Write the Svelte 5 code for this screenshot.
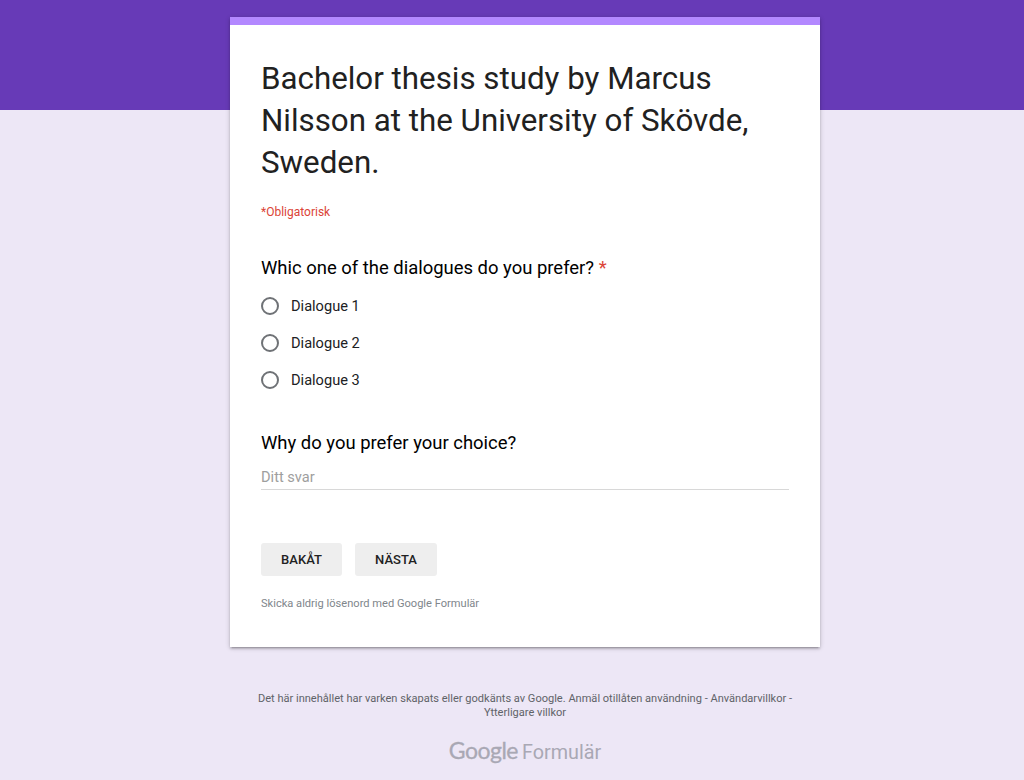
<script>
  const options = ['Dialogue 1', 'Dialogue 2', 'Dialogue 3'];
</script>

<div class="page">
  <form class="card" on:submit|preventDefault>
    <h1 class="title">Bachelor thesis study by Marcus Nilsson at the University of Skövde, Sweden.</h1>
    <p class="required-note">*Obligatorisk</p>

    <fieldset class="question">
      <legend class="question-title">Whic one of the dialogues do you prefer? <span class="star">*</span></legend>
      <div class="options">
        {#each options as option}
          <label class="option">
            <span class="radio"></span>
            <span>{option}</span>
          </label>
        {/each}
      </div>
    </fieldset>

    <div class="question second">
      <div class="question-title">Why do you prefer your choice?</div>
      <div class="answer">Ditt svar</div>
    </div>

    <div class="buttons">
      <button type="button" class="btn">BAKÅT</button>
      <button type="button" class="btn next">NÄSTA</button>
    </div>

    <p class="warning">Skicka aldrig lösenord med Google Formulär</p>
  </form>

  <footer class="footer">
    <p class="disclaimer">Det här innehållet har varken skapats eller godkänts av Google. Anmäl otillåten användning - Användarvillkor - Ytterligare villkor</p>
    <div class="brand"><span class="google">Google</span><span class="product">Formulär</span></div>
  </footer>
</div>

<style>
  :global(body) {
    margin: 0;
    background: #ede7f6;
  }

  .page {
    height: 780px;
    overflow: hidden;
    box-sizing: border-box;
    padding-top: 17px;
    background: linear-gradient(#673ab7 110px, #ede7f6 110px);
    font-family: Roboto, "Liberation Sans", sans-serif;
    color: #202124;
  }

  .card {
    box-sizing: border-box;
    width: 590px;
    height: 630px;
    margin-left: 230px;
    padding: 33px 31px 0 31px;
    background: #fff;
    border-top: 8px solid #b388ff;
    box-shadow: 0 2px 2px 0 rgba(0, 0, 0, 0.14), 0 3px 1px -2px rgba(0, 0, 0, 0.12), 0 1px 5px 0 rgba(0, 0, 0, 0.2);
  }

  .title {
    margin: 0;
    font-size: 31.3px;
    font-weight: 400;
    line-height: 42px;
    color: #212121;
  }

  .required-note {
    margin: 20px 0 0;
    font-size: 12px;
    line-height: 16px;
    color: #db4437;
  }

  .question {
    margin: 0;
    padding: 0;
    border: 0;
  }

  fieldset.question {
    margin-top: 36px;
  }

  .question-title {
    padding: 0;
    font-size: 18.45px;
    line-height: 24px;
    color: #000;
  }

  .star {
    color: #db4437;
  }

  .options {
    display: flex;
    flex-direction: column;
    gap: 17px;
    margin-top: 16px;
  }

  .option {
    display: flex;
    align-items: center;
    gap: 12px;
    height: 20px;
    font-size: 14.6px;
    color: #202124;
  }

  .radio {
    box-sizing: border-box;
    width: 18px;
    height: 18px;
    border: 2px solid #6f7276;
    border-radius: 50%;
  }

  .second {
    margin-top: 41px;
  }

  .answer {
    margin-top: 12px;
    padding-bottom: 1px;
    font-size: 14.6px;
    line-height: 21px;
    color: #9e9e9e;
    border-bottom: 1px solid #d8d8d8;
  }

  .buttons {
    display: flex;
    gap: 13px;
    margin-top: 53px;
  }

  .btn {
    width: 81px;
    height: 33px;
    padding: 0;
    border: 0;
    border-radius: 3px;
    background: #eeeeee;
    font-family: inherit;
    font-size: 13px;
    font-weight: 500;
    color: #212121;
  }

  .next {
    width: 82px;
  }

  .warning {
    margin: 21px 0 0;
    font-size: 11.1px;
    line-height: 14px;
    color: #80868b;
  }

  .footer {
    text-align: center;
    margin-left: 230px;
    width: 590px;
  }

  .disclaimer {
    margin: 0;
    padding: 45px 24px 0;
    font-size: 11.05px;
    line-height: 14px;
    color: #5f6368;
  }

  .brand {
    display: flex;
    justify-content: center;
    align-items: baseline;
    gap: 4px;
    margin-top: 15px;
    line-height: 30px;
    color: #a9a8b4;
  }

  .google {
    font-family: Lato, sans-serif;
    font-size: 23px;
    letter-spacing: -0.5px;
    -webkit-text-stroke: 0.3px #a9a8b4;
  }

  .product {
    font-size: 19.8px;
  }
</style>
